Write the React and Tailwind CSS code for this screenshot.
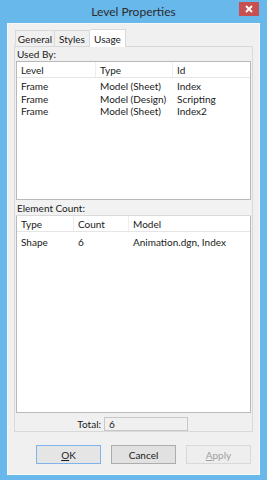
import React from "react";

const font = { fontFamily: 'Lato, "Noto Sans", sans-serif' };

function Header({ cols }) {
  return (
    <div className="flex h-[16px] shrink-0 items-center border-b border-[#e5e5e5] bg-white">
      {cols.map((c, i) => (
        <div
          key={i}
          className={`flex h-full items-center whitespace-nowrap pl-[4px] ${c.w} ${i < cols.length - 1 ? "border-r border-[#eeeeee]" : ""}`}
        >
          {c.t}
        </div>
      ))}
    </div>
  );
}

export default function App() {
  return (
    <div
      className="flex h-[480px] w-[267px] flex-col bg-[#68b8ec] text-[10px] leading-none text-[#1a1a1a]"
      style={font}
    >
      {/* title bar */}
      <div className="relative flex h-[23px] shrink-0 items-center justify-center">
        <span className="text-[12px] text-[#2b2b2b]">Level Properties</span>
        <div className="absolute right-[8px] top-[2px] flex h-[14px] w-[20px] items-center justify-center bg-[#c75050]">
          <svg width="8" height="8" viewBox="0 0 8 8">
            <path d="M1 1 L7 7 M7 1 L1 7" stroke="white" strokeWidth="1.8" />
          </svg>
        </div>
      </div>

      {/* client */}
      <div className="mx-[7px] mb-[5px] flex flex-1 flex-col border border-[#f8f8f8] bg-[#f0f0f0]">
        {/* tabs */}
        <div className="ml-[7px] mt-[4px] flex h-[18px] items-end whitespace-nowrap">
          <div className="flex h-[16px] w-[40px] items-center justify-center border border-b-0 border-[#d9d9d9] bg-[#f0f0f0]">
            General
          </div>
          <div className="flex h-[16px] w-[35px] items-center justify-center border border-b-0 border-l-0 border-[#d9d9d9] bg-[#f0f0f0]">
            Styles
          </div>
          <div className="relative top-[1px] flex h-[18px] w-[36px] items-center justify-center border border-b-0 border-l-0 border-[#d9d9d9] bg-white">
            Usage
          </div>
        </div>

        {/* panel */}
        <div className="ml-[6px] flex h-[386px] w-[239px] flex-col border border-[#d9d9d9] bg-[#f0f0f0] px-[1px] whitespace-nowrap">
          <div className="flex h-[14px] items-center pl-[1px]">Used By:</div>
          <div className="flex h-[139px] flex-col border border-[#b9b9b9] bg-white">
            <Header
              cols={[
                { t: "Level", w: "w-[79px]" },
                { t: "Type", w: "w-[77px]" },
                { t: "Id", w: "flex-1" },
              ]}
            />
            <div className="flex flex-col pt-[2px]">
              {[
                ["Frame", "Model (Sheet)", "Index"],
                ["Frame", "Model (Design)", "Scripting"],
                ["Frame", "Model (Sheet)", "Index2"],
              ].map((r, i) => (
                <div key={i} className="flex h-[12.5px] items-center">
                  <div className="w-[79px] pl-[4px]">{r[0]}</div>
                  <div className="w-[77px] pl-[4px]">{r[1]}</div>
                  <div className="flex-1 pl-[4px]">{r[2]}</div>
                </div>
              ))}
            </div>
          </div>

          <div className="flex h-[16px] items-center border-b border-[#dadada] bg-[#f2f2f2] pl-[1px] pt-[1px]">
            Element Count:
          </div>
          <div className="flex h-[197px] flex-col border border-t-0 border-[#b9b9b9] bg-white">
            <Header
              cols={[
                { t: "Type", w: "w-[57px]" },
                { t: "Count", w: "w-[55px]" },
                { t: "Model", w: "flex-1" },
              ]}
            />
            <div className="flex h-[17px] items-center pt-[2px]">
              <div className="w-[57px] pl-[4px]">Shape</div>
              <div className="w-[55px] pl-[4px]">6</div>
              <div className="flex-1 pl-[4px]">Animation.dgn, Index</div>
            </div>
          </div>

          <div className="flex h-[18px] items-end">
            <div className="flex h-[14px] w-[88px] items-center justify-end pr-[3px]">Total:</div>
            <div className="flex h-[14px] w-[84px] items-center border border-[#c8c8c8] bg-[#f0f0f0] pl-[4px]">
              6
            </div>
          </div>
        </div>

        {/* buttons */}
        <div className="mt-[13px] flex justify-end gap-[10px] pr-[8px]">
          <div className="flex h-[19px] w-[65px] items-center justify-center border border-[#7eb4ea] bg-[#e5e5e5]">
            <span className="underline decoration-1 underline-offset-1">O</span>K
          </div>
          <div className="flex h-[19px] w-[65px] items-center justify-center border border-[#adadad] bg-[#e1e1e1]">
            Cancel
          </div>
          <div className="flex h-[19px] w-[65px] items-center justify-center border border-[#d9d9d9] bg-[#eeeeee] text-[#a0a0a0]">
            <span className="underline decoration-1 underline-offset-1">A</span>pply
          </div>
        </div>
      </div>
    </div>
  );
}
